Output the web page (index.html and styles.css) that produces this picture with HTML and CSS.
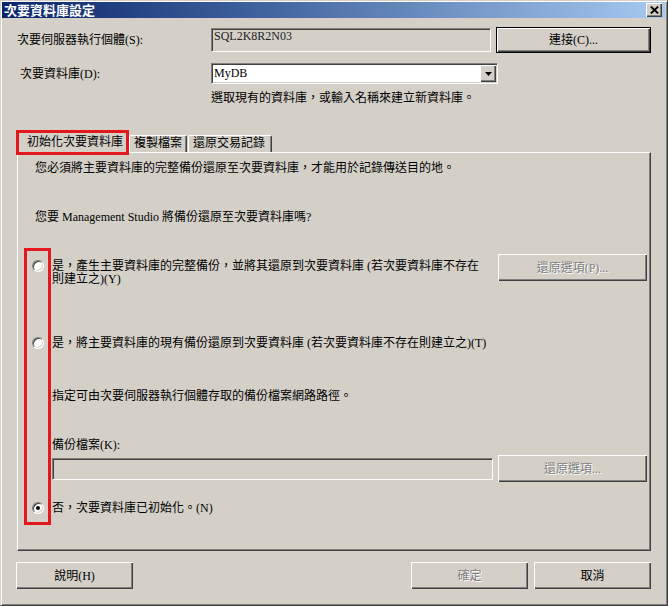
FILE: index.html
```html
<!DOCTYPE html>
<html lang="zh-Hant">
<head>
<meta charset="utf-8">
<title>次要資料庫設定</title>
<link rel="stylesheet" href="styles.css">
</head>
<body>
<div class="window">
  <div class="titlebar">
    <span class="title">次要資料庫設定</span>
    <span class="close"><svg width="9" height="8" viewBox="0 0 9 8"><path d="M0.8 0.5 L8.2 7.5 M8.2 0.5 L0.8 7.5" stroke="#000" stroke-width="1.9"/></svg></span>
  </div>
  <div class="body">
    <div class="row row1">
      <span class="lbl">次要伺服器執行個體(S):</span>
      <div class="textbox readonly">SQL2K8R2N03</div>
      <div class="btn btn-default btn-connect">連接(C)...</div>
    </div>
    <div class="row row2">
      <span class="lbl lbl-db">次要資料庫(D):</span>
      <div class="combo">
        <span class="combo-value">MyDB</span>
        <span class="combo-arrow"><svg width="7" height="4" viewBox="0 0 7 4"><path d="M0 0H7L3.5 4Z" fill="#000"/></svg></span>
      </div>
    </div>
    <div class="hint">選取現有的資料庫，或輸入名稱來建立新資料庫。</div>

    <div class="tabs">
      <div class="tab tab-active">初始化次要資料庫</div>
      <div class="tab tab-copy">複製檔案</div>
      <div class="tab tab-restore">還原交易記錄</div>
    </div>
    <div class="panel">
      <div class="callout-radios"></div>
      <div class="ptext p1">您必須將主要資料庫的完整備份還原至次要資料庫，才能用於記錄傳送目的地。</div>
      <div class="ptext p2">您要 Management Studio 將備份還原至次要資料庫嗎?</div>

      <div class="opt opt1">
        <div class="radio-line">
          <span class="radio"></span>
          <span class="opt-text two-line">是，產生主要資料庫的完整備份，並將其還原到次要資料庫 (若次要資料庫不存在<br>則建立之)(Y)</span>
        </div>
        <div class="btn btn-disabled btn-side">還原選項(P)...</div>
      </div>

      <div class="opt opt2">
        <div class="radio-line">
          <span class="radio"></span>
          <span class="opt-text">是，將主要資料庫的現有備份還原到次要資料庫 (若次要資料庫不存在則建立之)(T)</span>
        </div>
      </div>

      <div class="sub note">指定可由次要伺服器執行個體存取的備份檔案網路路徑。</div>
      <div class="sub lbl-bak">備份檔案(K):</div>
      <div class="filerow">
        <div class="textbox field-disabled"></div>
        <div class="btn btn-disabled btn-side">還原選項...</div>
      </div>

      <div class="opt opt3">
        <div class="radio-line">
          <span class="radio checked"></span>
          <span class="opt-text">否，次要資料庫已初始化。(N)</span>
        </div>
      </div>
    </div>

    <div class="footer">
      <div class="btn btn-foot btn-help">說明(H)</div>
      <div class="btn btn-foot btn-disabled">確定</div>
      <div class="btn btn-foot">取消</div>
    </div>
  </div>
</div>
</body>
</html>
```
FILE: styles.css
```css
* {
  box-sizing: border-box;
}

html,
body {
  margin: 0;
  padding: 0;
}

body {
  width: 668px;
  height: 606px;
  overflow: hidden;
  background: #d4d0c8;
  color: #000;
  font-family: "Liberation Serif", "Noto Sans CJK TC", serif;
  font-size: 12px;
  line-height: 14px;
}

.window {
  width: 668px;
  height: 606px;
  border: 1px solid;
  border-color: #d4d0c8 #404040 #404040 #d4d0c8;
  box-shadow: inset 1px 1px #ffffff, inset -1px -1px #808080;
  padding: 1px 2px 0 1px;
}

/* title bar */
.titlebar {
  height: 16px;
  display: flex;
  align-items: center;
  justify-content: space-between;
  padding: 0 3px 0 2px;
  background: linear-gradient(to right, #0a246a 0%, #3a5c98 35%, #a6caf0 100%);
}

.title {
  color: #fff;
  font-family: "Noto Sans CJK TC", sans-serif;
  font-weight: bold;
  font-size: 13px;
  line-height: 16px;
}

.close {
  width: 16px;
  height: 14px;
  display: flex;
  align-items: center;
  justify-content: center;
  background: #d4d0c8;
  box-shadow: inset 1px 1px #ffffff, inset -1px -1px #404040, inset -2px -2px #808080;
}

.close svg {
  display: block;
}

/* body */
.body {
  padding: 9px 0 0 15px;
}

.row {
  display: flex;
  align-items: center;
}

.row1 {
  height: 26px;
}

.row2 {
  height: 21px;
  margin-top: 10px;
}

.lbl {
  width: 194px;
  flex: none;
}

.lbl-db {
  padding-left: 3px;
}

.textbox {
  border: 1px solid;
  border-color: #808080 #ffffff #ffffff #808080;
  box-shadow: inset 1px 1px #404040, inset -1px -1px #d4d0c8;
}

.readonly {
  width: 280px;
  height: 24px;
  padding: 1px 2px 0 2px;
  line-height: 12px;
  color: #222;
  background: #d4d0c8;
}

.combo {
  width: 287px;
  height: 21px;
  display: flex;
  align-items: stretch;
  background: #fff;
  border: 1px solid;
  border-color: #808080 #ffffff #ffffff #808080;
  box-shadow: inset 1px 1px #404040, inset -1px -1px #d4d0c8;
  padding: 1px;
}

.combo-value {
  flex: 1;
  padding-left: 1px;
  line-height: 17px;
}

.combo-arrow {
  width: 16px;
  display: flex;
  align-items: center;
  justify-content: center;
  background: #d4d0c8;
  box-shadow: inset 1px 1px #ffffff, inset -1px -1px #404040, inset -2px -2px #808080;
}

.combo-arrow svg {
  display: block;
}

.hint {
  height: 14px;
  margin: 7px 0 0 194px;
}

/* buttons */
.btn {
  display: flex;
  align-items: center;
  justify-content: center;
  background: #d4d0c8;
  box-shadow: inset 1px 1px #ffffff, inset -1px -1px #404040, inset -2px -2px #808080;
}

.btn-default {
  border: 1px solid #000;
}

.btn-connect {
  margin-left: 5px;
  width: 155px;
  height: 26px;
}

.btn-disabled {
  color: #808080;
  text-shadow: 1px 1px #ffffff;
}

.btn-side {
  margin-left: auto;
  width: 149px;
  height: 27px;
  flex: none;
}

/* tabs */
.tabs {
  height: 21px;
  margin-top: 27px;
  margin-bottom: -1px;
  display: flex;
  align-items: flex-end;
  position: relative;
  z-index: 1;
}

.tab {
  background: #d4d0c8;
  border-top: 1px solid #ffffff;
  border-left: 1px solid #ffffff;
  border-right: 1px solid #404040;
  box-shadow: inset -1px 0 #808080;
  border-radius: 2px 2px 0 0;
  white-space: nowrap;
}

.tab-active {
  width: 111px;
  height: 21px;
  padding: 2px 0 0 9px;
  position: relative;
}

.tab-active::after {
  content: "";
  position: absolute;
  top: -3px;
  left: -2px;
  right: -2px;
  bottom: -2px;
  border: 3px solid #e3181f;
}

.tab-copy {
  margin-left: 1px;
  width: 58px;
  height: 17px;
  margin-bottom: 1px;
  padding: 0 0 0 4px;
}

.tab-restore {
  margin-left: 1px;
  width: 84px;
  height: 17px;
  margin-bottom: 1px;
  padding: 0 0 0 4px;
}

/* panel */
.panel {
  position: relative;
  width: 634px;
  height: 399px;
  border: 1px solid;
  border-color: #ffffff #404040 #404040 #ffffff;
  box-shadow: inset -1px -1px #808080;
  padding: 8px 3px 0 14px;
}

.callout-radios {
  position: absolute;
  left: 6px;
  top: 95px;
  width: 27px;
  height: 277px;
  border: 3px solid #e3181f;
}

.ptext {
  height: 14px;
  margin-left: 3px;
}

.p2 {
  margin-top: 35px;
}

.opt {
  display: flex;
  align-items: flex-start;
}

.opt1 {
  height: 27px;
  margin-top: 30px;
}

.opt1 .radio-line {
  margin-top: 6px;
}

.opt2 {
  height: 14px;
  margin-top: 55px;
}

.opt3 {
  height: 14px;
  margin-top: 19px;
}

.radio-line {
  display: flex;
  align-items: flex-start;
}

.opt-text {
  height: 14px;
  white-space: nowrap;
}

.two-line {
  height: 26px;
  line-height: 13px;
}

.radio {
  position: relative;
  flex: none;
  width: 12px;
  height: 12px;
  margin: 1px 8px 0 0;
  border-radius: 50%;
  background: #fff;
  border: 1px solid;
  border-color: #808080 #ffffff #ffffff #808080;
  box-shadow: inset 1px 1px #404040, inset -1px -1px #d4d0c8;
}

.opt1 .radio {
  margin-top: 0;
}

.radio.checked::after {
  content: "";
  position: absolute;
  left: 3px;
  top: 3px;
  width: 4px;
  height: 4px;
  border-radius: 50%;
  background: #000;
}

.sub {
  height: 14px;
  margin-left: 20px;
}

.note {
  margin-top: 39px;
}

.lbl-bak {
  margin-top: 35px;
}

.filerow {
  margin: 3px 0 0 20px;
  height: 27px;
  display: flex;
  align-items: center;
}

.field-disabled {
  width: 441px;
  height: 22px;
  background: #d4d0c8;
}

/* footer */
.footer {
  margin-top: 11px;
  width: 634px;
  display: flex;
  gap: 6px;
}

.btn-foot {
  width: 117px;
  height: 27px;
}

.btn-help {
  margin-left: -1px;
  margin-right: auto;
}
```
